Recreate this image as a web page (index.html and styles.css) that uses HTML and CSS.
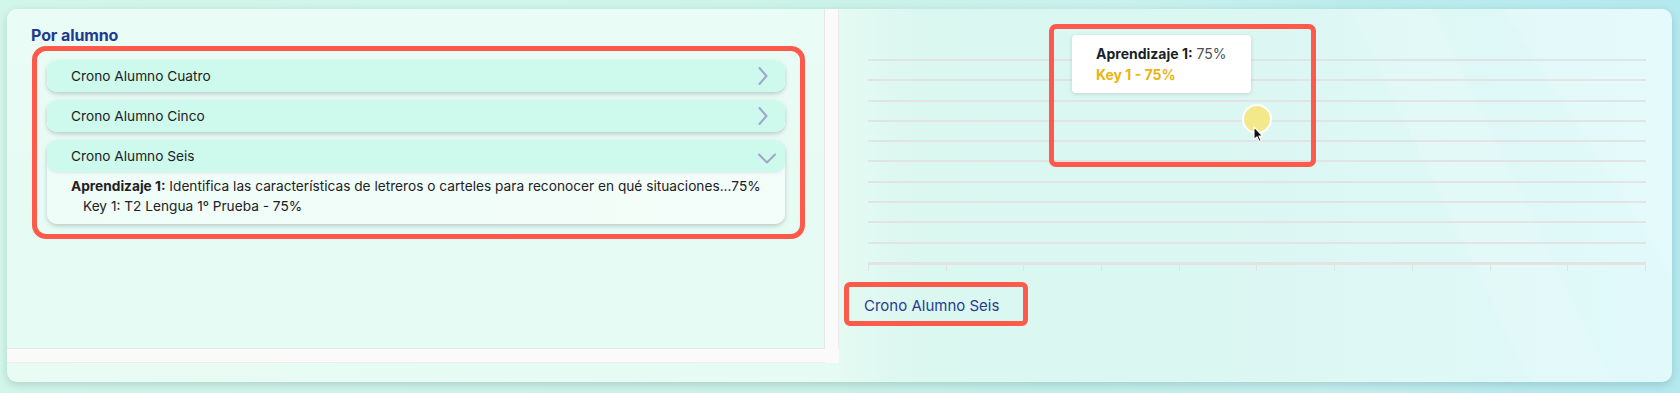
FILE: index.html
```html
<!DOCTYPE html>
<html lang="es">
<head>
<meta charset="utf-8">
<title>Por alumno</title>
<link rel="stylesheet" href="styles.css">
</head>
<body>
<div class="card">
  <section class="left">
    <div class="scroll-content">
      <h2 class="heading">Por alumno</h2>
      <div class="acc-frame">
        <div class="acc-item">
          <div class="acc-head">
            <span>Crono Alumno Cuatro</span>
            <svg class="chev-right" width="10" height="18" viewBox="0 0 10 18"><path d="M1.5 1 L8.5 9 L1.5 17" fill="none" stroke="#a3a6cb" stroke-width="2.1" stroke-linecap="round" stroke-linejoin="round"/></svg>
          </div>
        </div>
        <div class="acc-item">
          <div class="acc-head">
            <span>Crono Alumno Cinco</span>
            <svg class="chev-right" width="10" height="18" viewBox="0 0 10 18"><path d="M1.5 1 L8.5 9 L1.5 17" fill="none" stroke="#a3a6cb" stroke-width="2.1" stroke-linecap="round" stroke-linejoin="round"/></svg>
          </div>
        </div>
        <div class="acc-item open">
          <div class="acc-head">
            <span>Crono Alumno Seis</span>
            <svg class="chev-down" width="18" height="11" viewBox="0 0 18 11"><path d="M1 1.5 L9 9.5 L17 1.5" fill="none" stroke="#a3a6cb" stroke-width="2.1" stroke-linecap="round" stroke-linejoin="round"/></svg>
          </div>
          <div class="acc-body">
            <p class="learn"><b>Aprendizaje 1:</b> Identifica las características de letreros o carteles para reconocer en qué situaciones...75%</p>
            <p class="key">Key 1: T2 Lengua 1º Prueba - 75%</p>
          </div>
        </div>
      </div>
    </div>
    <div class="vbar"></div>
    <div class="hbar"></div>
    <div class="corner"></div>
  </section>

  <section class="right">
    <div class="chart">
      <div class="grid">
        <div class="gline"></div><div class="gline"></div><div class="gline"></div><div class="gline"></div>
        <div class="gline"></div><div class="gline"></div><div class="gline"></div><div class="gline"></div>
        <div class="gline"></div><div class="gline"></div><div class="gline axis"></div>
      </div>
      <div class="ticks">
        <i></i><i></i><i></i><i></i><i></i><i></i><i></i><i></i><i></i><i></i><i></i>
      </div>
    </div>
    <div class="legend">Crono Alumno Seis</div>

    <div class="highlight tip-frame"></div>
    <div class="tooltip">
      <div class="tip-title"><b>Aprendizaje 1:</b> 75%</div>
      <div class="tip-key">Key 1 - 75%</div>
    </div>
    <div class="point"></div>
    <svg class="cursor" width="11" height="17" viewBox="0 0 11 17"><path d="M1 1 L1 13.5 L4 10.8 L6.2 15.6 L8.2 14.7 L6 10 L9.8 10 Z" fill="#111" stroke="#fff" stroke-width="1.1" stroke-linejoin="round"/></svg>
  </section>
</div>
</body>
</html>
```

FILE: styles.css
```css
* { box-sizing: border-box; }

html, body { margin: 0; padding: 0; }

body {
  width: 1680px;
  height: 393px;
  overflow: hidden;
  font-family: Inter, "Noto Sans", "Liberation Sans", sans-serif;
  color: #1f2328;
  background:
    linear-gradient(62deg, rgba(255,255,255,0) 55%, rgba(255,255,255,0.15) 70%, rgba(255,255,255,0) 82%),
    linear-gradient(90deg, #d3f6ea 0%, #cdf3e8 45%, #bfeeea 70%, #b4e9ef 100%);
  padding: 9px 8px 11px 7px;
}

.card {
  display: flex;
  height: 373px;
  border-radius: 10px;
  overflow: hidden;
  box-shadow: 0 3px 8px rgba(60, 90, 100, 0.22);
  background:
    linear-gradient(90deg, #e8fcf4 0%, #e6fbf3 49%, #daf7f0 55%, #dbf7f2 72%, #e1f9fa 100%);
}

/* ---------- left (scroll box) ---------- */
.left {
  width: 832px;
  height: 354px;
  display: grid;
  grid-template-columns: 818px 14px;
  grid-template-rows: 340px 14px;
  flex: none;
}

.scroll-content {
  padding: 17px 0 0 24px;
  border-right: 1px solid #e6e8e7;
  border-bottom: 1px solid #e6e8e7;
  background: linear-gradient(180deg, #e9fcf5 0%, #e5fbf3 100%);
}

.vbar { background: #fafafa; border-right: 1px solid #ececec; }
.hbar { background: #fafafa; border-bottom: 1px solid #ececec; }
.corner { background: #fafafa; }

.heading {
  margin: 0 0 1px 0;
  font-size: 16px;
  line-height: 19px;
  font-weight: 700;
  color: #1f3a8e;
  letter-spacing: -0.1px;
}

.acc-frame {
  width: 773px;
  margin-left: 1px;
  border: 5px solid #fd5a4b;
  border-radius: 14px;
  padding: 9px 15px 10px 10px;
  display: flex;
  flex-direction: column;
  gap: 8px;
}

.acc-item {
  border-radius: 10px;
  box-shadow: 0 2px 4px rgba(70, 80, 90, 0.28);
  overflow: hidden;
  background: linear-gradient(90deg, #effdf8 0%, #f3fdf9 100%);
}

.acc-head {
  height: 32px;
  display: flex;
  align-items: center;
  justify-content: space-between;
  padding: 0 17px 0 24px;
  background: #cdfaed;
  font-size: 13.7px;
  color: #1d2125;
  border-radius: 10px;
}

.open .acc-head {
  box-shadow: 0 1px 3px rgba(70, 80, 90, 0.12);
}

.chev-right { margin-top: -1px; }
.chev-down { margin-right: -8px; margin-top: 4px; }

.acc-body {
  padding: 4px 0 8px 24px;
  font-size: 13.7px;
  line-height: 20px;
  color: #1d2125;
}

.acc-body p { margin: 0; }
.acc-body b { font-weight: 700; }
.key { padding-left: 12px; }

/* ---------- right (chart) ---------- */
.right {
  position: relative;
  flex: 1;
  padding: 50px 26px 0 5px;
  background:
    linear-gradient(64deg, rgba(255,255,255,0) 68%, rgba(255,255,255,0.12) 68.5%, rgba(255,255,255,0.12) 76%, rgba(255,255,255,0) 76.5%),
    linear-gradient(58deg, rgba(255,255,255,0) 84%, rgba(255,255,255,0.12) 84.5%);
}

.chart {
  margin-left: 24px;
  height: 212px;
}

.grid {
  height: 206px;
  display: flex;
  flex-direction: column;
  justify-content: space-between;
}

.gline {
  height: 2px;
  background: rgba(226, 224, 224, 0.85);
}

.gline.axis {
  height: 3px;
  background: rgba(226, 226, 226, 0.95);
}

.ticks {
  display: flex;
  justify-content: space-between;
  height: 6px;
}

.ticks i {
  width: 1px;
  background: #e2e2e2;
}

.legend {
  display: inline-block;
  margin-top: 11px;
  width: 184px;
  height: 44px;
  border: 5px solid #fd5a4b;
  border-radius: 6px;
  padding: 9px 0 0 15px;
  font-size: 15px;
  line-height: 20px;
  color: #2a3a92;
}

.tip-frame {
  position: absolute;
  left: 210px;
  top: 15px;
  width: 267px;
  height: 143px;
  border: 5px solid #fd5a4b;
  border-radius: 7px;
}

.tooltip {
  position: absolute;
  left: 233px;
  top: 26px;
  width: 179px;
  height: 58px;
  background: #fff;
  border-radius: 4px;
  box-shadow: 0 1px 4px rgba(0, 0, 0, 0.14);
  padding: 8px 0 0 24px;
  font-size: 14px;
  line-height: 21px;
}

.tip-title { color: #4a4f57; }
.tip-title b { color: #1b1f27; font-weight: 700; }
.tip-key { color: #ebb30d; font-weight: 700; }

.point {
  position: absolute;
  left: 403px;
  top: 95px;
  width: 30px;
  height: 30px;
  border-radius: 50%;
  background: #f3e98a;
  border: 2px solid #ffffff;
}

.cursor {
  position: absolute;
  left: 414px;
  top: 117px;
}
```
